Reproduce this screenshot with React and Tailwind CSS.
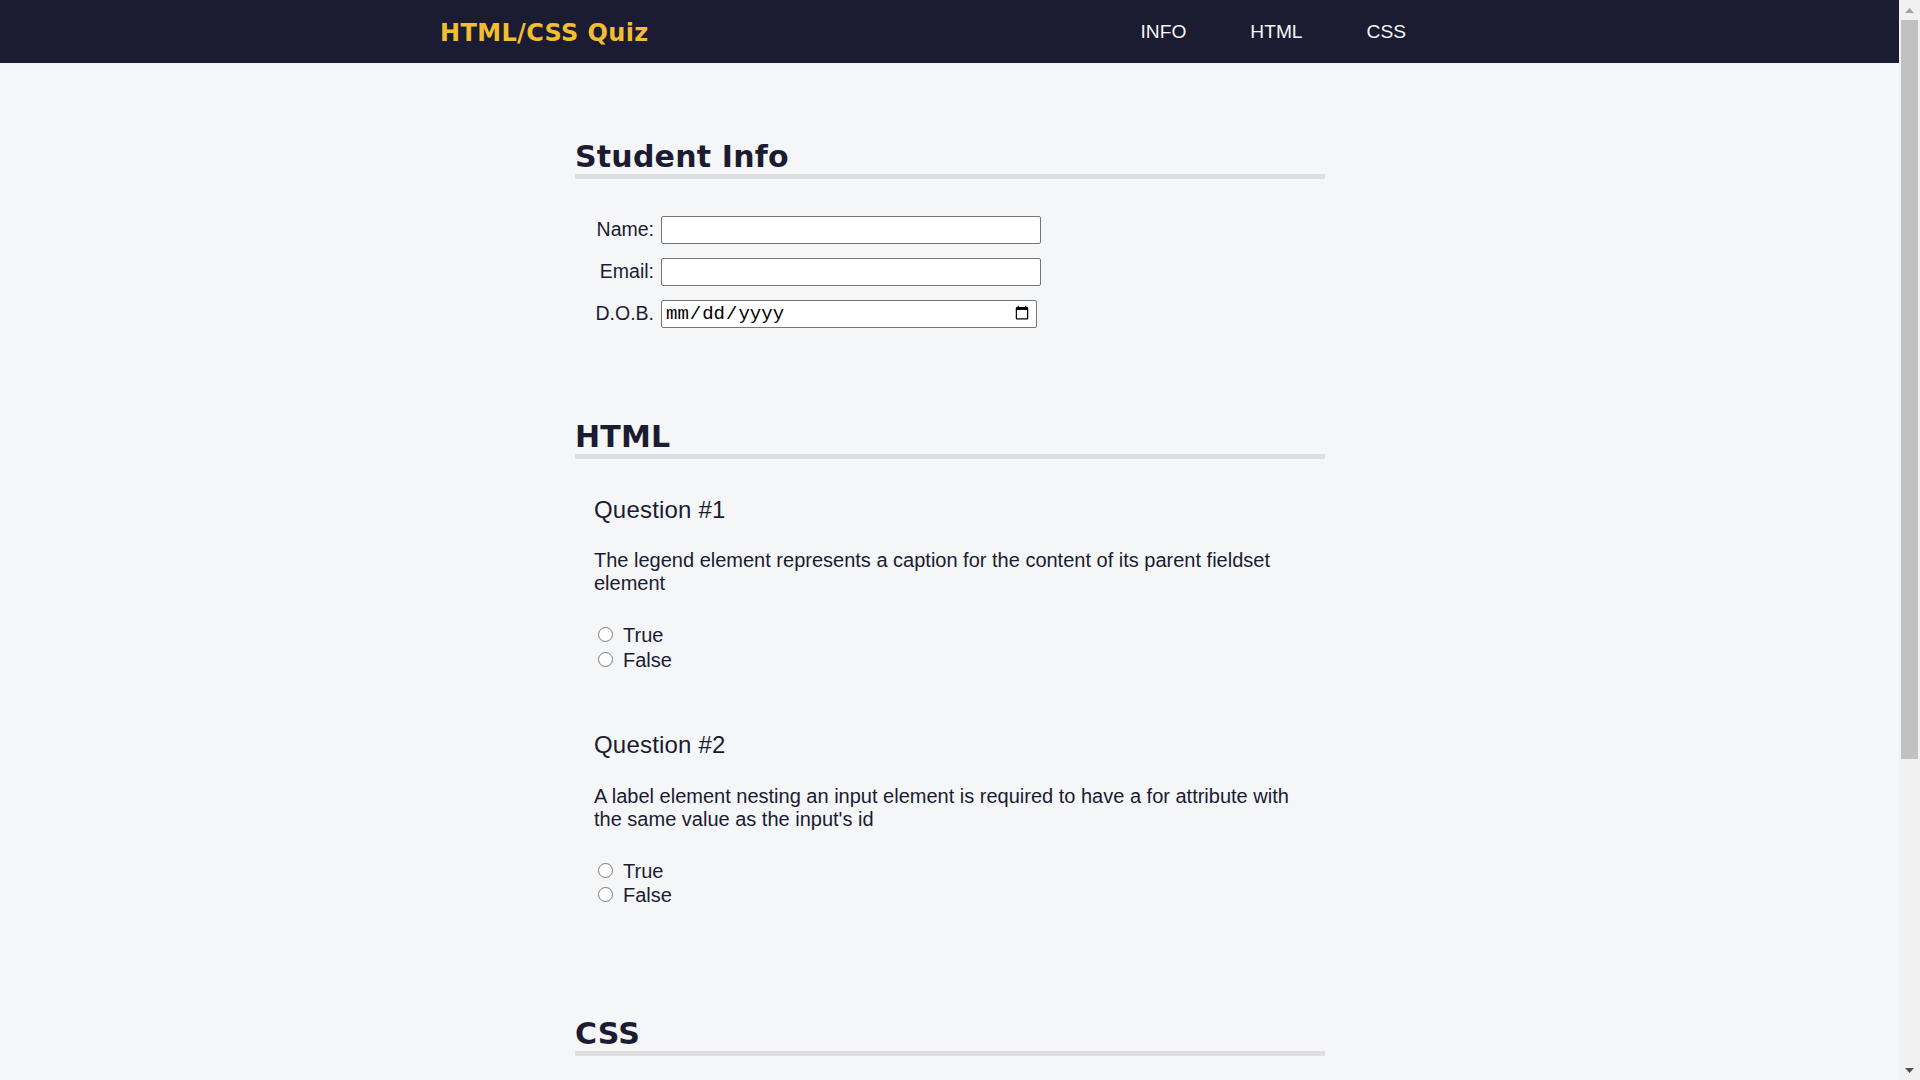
import React from "react";

const Question = ({ n, text, name, first }) => (
  <div className={first ? "pl-[19px] mt-[37px]" : "pl-[19px] mt-[59px]"}>
    <h3 className="text-[24px] leading-[28px] tracking-[0.2px] font-normal text-[#1b1b32]">Question #{n}</h3>
    <p className="mt-[25.3px] w-[716px] text-[20px] leading-[23px] text-[#1b1b32]">{text}</p>
    <div className="mt-[28.2px]">
      <label className="block text-[20px] leading-[24.5px] text-[#1b1b32]">
        <input type="radio" name={name} className="w-[15px] h-[15px] ml-[4px] mr-[10px]" />
        True
      </label>
      <label className="block text-[20px] leading-[24.5px] text-[#1b1b32]">
        <input type="radio" name={name} className="w-[15px] h-[15px] ml-[4px] mr-[10px]" />
        False
      </label>
    </div>
  </div>
);

const SectionHeading = ({ children }) => (
  <h2 className="font-['DejaVu_Sans',Verdana,sans-serif] font-bold text-[30px] leading-[35px] tracking-[0.2px] text-[#1b1b32] border-b-[5px] border-[#dfdfe2]">
    {children}
  </h2>
);

const Scrollbar = () => (
  <div className="w-[21px] shrink-0 h-screen bg-[#f1f1f1] flex flex-col items-center">
    <div className="h-[20px] w-full flex items-center justify-center">
      <svg width="9" height="5" viewBox="0 0 9 5">
        <path d="M0 5 L4.5 0 L9 5 Z" fill="#a3a3a3" />
      </svg>
    </div>
    <div className="h-[739px] w-[17px] bg-[#c1c1c1]" />
    <div className="flex-1" />
    <div className="h-[20px] w-full flex items-center justify-center">
      <svg width="9" height="5" viewBox="0 0 9 5">
        <path d="M0 0 L9 0 L4.5 5 Z" fill="#505050" />
      </svg>
    </div>
  </div>
);

export default function App() {
  return (
    <div className="flex h-screen overflow-hidden bg-[#f5f6f7] font-['Liberation_Sans',Arial,sans-serif] text-[#1b1b32]">
      <div className="flex-1 min-w-0 h-screen overflow-hidden">
        <header className="h-[63px] bg-[#1b1b32] flex items-center">
          <div className="ml-[440px] w-[966px] flex items-center justify-between">
            <h1 className="pt-[3px] font-['DejaVu_Sans',Verdana,sans-serif] font-bold text-[24px] leading-[28px] tracking-[0.35px] text-[#f1be32]">
              HTML/CSS Quiz
            </h1>
            <nav className="flex gap-[64px] text-[19.2px] leading-[22px] text-[#f5f6f7]">
              <a href="#student-info">INFO</a>
              <a href="#html-questions">HTML</a>
              <a href="#css-questions">CSS</a>
            </nav>
          </div>
        </header>

        <main className="ml-[575px] w-[750px] pt-[76px]">
          <section id="student-info">
            <SectionHeading>Student Info</SectionHeading>
            <div className="mt-[37px] grid grid-cols-[79px_auto] auto-rows-[28px] gap-x-[7px] gap-y-[14px] items-center text-[19.5px]">
              <label htmlFor="student-name" className="text-right">Name:</label>
              <input id="student-name" type="text" className="w-[380px] h-[28px] bg-white border border-[#767676] rounded-[2px] px-[2px]" />
              <label htmlFor="student-email" className="text-right">Email:</label>
              <input id="student-email" type="email" className="w-[380px] h-[28px] bg-white border border-[#767676] rounded-[2px] px-[2px]" />
              <label htmlFor="birth-date" className="text-right">D.O.B.</label>
              <input
                id="birth-date"
                type="date"
                className="w-[376px] h-[28px] py-0 bg-white border border-[#767676] rounded-[2px] pl-[3px] pr-[6px] font-['Liberation_Mono',monospace] text-[19px] leading-[24px] text-black [&::-webkit-calendar-picker-indicator]:w-[16px] [&::-webkit-calendar-picker-indicator]:h-[18px] [&::-webkit-calendar-picker-indicator]:p-0 [&::-webkit-calendar-picker-indicator]:m-0"
              />
            </div>
          </section>

          <section id="html-questions" className="mt-[91px]">
            <SectionHeading>HTML</SectionHeading>
            <Question first n={1} name="q1" text="The legend element represents a caption for the content of its parent fieldset element" />
            <Question n={2} name="q2" text="A label element nesting an input element is required to have a for attribute with the same value as the input's id" />
          </section>

          <section id="css-questions" className="mt-[108px]">
            <SectionHeading>CSS</SectionHeading>
          </section>
        </main>
      </div>
      <Scrollbar />
    </div>
  );
}
